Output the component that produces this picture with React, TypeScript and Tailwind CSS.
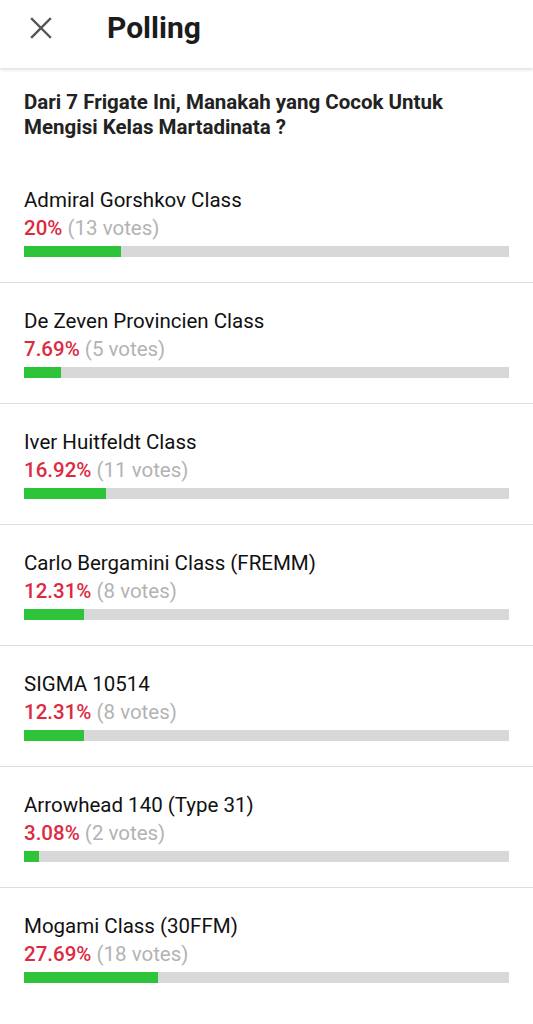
const options = [
  { name: "Admiral Gorshkov Class", pct: "20%", votes: 13, value: 20 },
  { name: "De Zeven Provincien Class", pct: "7.69%", votes: 5, value: 7.69 },
  { name: "Iver Huitfeldt Class", pct: "16.92%", votes: 11, value: 16.92 },
  { name: "Carlo Bergamini Class (FREMM)", pct: "12.31%", votes: 8, value: 12.31 },
  { name: "SIGMA 10514", pct: "12.31%", votes: 8, value: 12.31 },
  { name: "Arrowhead 140 (Type 31)", pct: "3.08%", votes: 2, value: 3.08 },
  { name: "Mogami Class (30FFM)", pct: "27.69%", votes: 18, value: 27.69 },
]

export default function App() {
  return (
    <div className="min-h-screen bg-white font-['Roboto',sans-serif] text-[#1a1a1a]">
      <header className="h-[68px] flex items-center pb-[13px] shadow-[0_2px_3px_rgba(0,0,0,0.12)] relative z-10">
        <div className="w-[107px] flex pl-[30px]">
          <svg width="22" height="22" viewBox="0 0 22 22" fill="none" stroke="#555" strokeWidth="2.4" strokeLinecap="square">
            <path d="M2 2 L20 20 M20 2 L2 20" />
          </svg>
        </div>
        <h1 className="text-[30px] font-bold leading-none text-[#1c1c1c]">Polling</h1>
      </header>

      <div className="px-[24px] pt-[22px] pb-[22px]">
        <p className="text-[20.5px] leading-[25px] font-bold text-[#222]">
          Dari 7 Frigate Ini, Manakah yang Cocok Untuk Mengisi Kelas Martadinata ?
        </p>
      </div>

      <ul>
        {options.map((o, i) => (
          <li key={o.name} className={i > 0 ? "border-t border-[#dedede]" : ""}>
            <div className="px-[24px] pt-[24px] pb-[25px]">
              <div className="text-[20.5px] leading-[28px] text-[#111]">{o.name}</div>
              <div className="text-[20.5px] leading-[28px]">
                <span className="font-medium text-[#dd2a3f]">{o.pct}</span>{" "}
                <span className="text-[#b3b3b3]">({o.votes} votes)</span>
              </div>
              <div className="mt-[4px] h-[11px] bg-[#d8d8d8] w-[485px]">
                <div className="h-full bg-[#2ec43a]" style={{ width: `${o.value}%` }} />
              </div>
            </div>
          </li>
        ))}
      </ul>
    </div>
  )
}
